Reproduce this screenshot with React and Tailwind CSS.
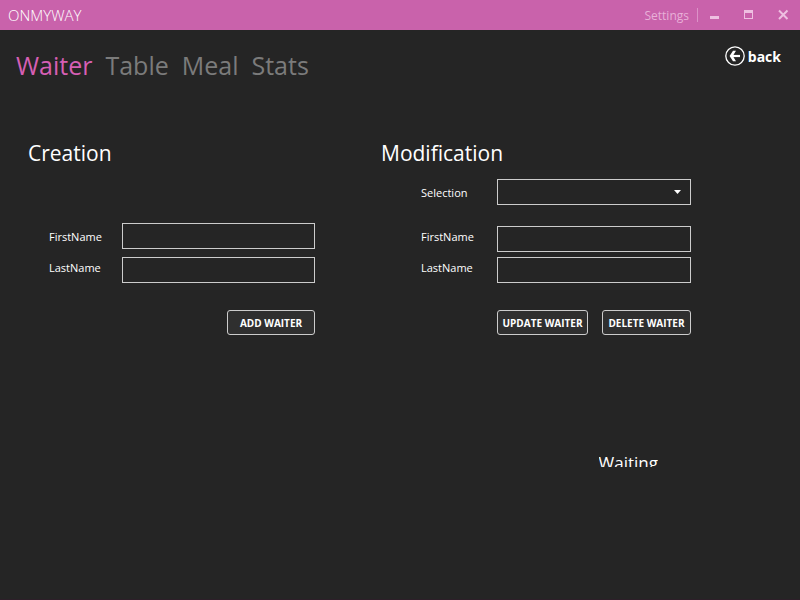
import React from "react";

const fieldClass =
  "h-[26px] min-w-0 flex-1 rounded-none border border-[#cccccc] bg-[#252525] px-1 text-xs text-white outline-none";
const labelClass = "pt-[3px] pl-px text-[11px] leading-4 text-white";
const buttonClass =
  "h-[25px] rounded-[3px] border border-[#cccccc] bg-[#2f2f2f] text-center text-[10px] leading-4 font-bold whitespace-nowrap text-white";

function TitleBar() {
  return (
    <header className="flex h-[30px] items-center bg-[#c962ab] pr-[10px] pl-2">
      <h1 className="flex-1 text-[15px] leading-5 font-light text-white">ONMYWAY</h1>
      <button className="pt-px text-xs leading-4 text-[#e8b0d8]">Settings</button>
      <span className="mr-3 ml-2 h-[14px] w-px bg-[#dc92c8]" />
      <div className="flex items-center gap-[22px] text-[#eebfe1]">
        <button aria-label="Minimize">
          <svg width="12" height="12" viewBox="0 0 12 12" className="block" shapeRendering="crispEdges">
            <path d="M0 7h9v3H0z" fill="currentColor" />
          </svg>
        </button>
        <button aria-label="Maximize">
          <svg width="12" height="12" viewBox="0 0 12 12" className="block" shapeRendering="crispEdges">
            <path d="M0 1h9v9H0zM1 4v5h7V4z" fill="currentColor" fillRule="evenodd" />
          </svg>
        </button>
        <button aria-label="Close">
          <svg width="12" height="12" viewBox="0 0 12 12" className="block">
            <path d="M1 1.5l8.5 8.5M9.5 1.5L1 10" stroke="currentColor" strokeWidth="2" />
          </svg>
        </button>
      </div>
    </header>
  );
}

function Navigation() {
  return (
    <div className="flex items-start justify-between pt-4 pr-[19px] pl-4">
      <nav className="flex gap-[13px] pt-px text-[25px] leading-9 text-[#7b7b7b]">
        <a href="#waiter" className="text-[#d65fb4]">Waiter</a>
        <a href="#table">Table</a>
        <a href="#meal">Meal</a>
        <a href="#stats">Stats</a>
      </nav>
      <button className="flex items-start gap-[3px] text-sm leading-5 font-bold text-white">
        <svg width="20" height="20" viewBox="0 0 20 20" fill="none" stroke="currentColor">
          <circle cx="10" cy="10" r="9.2" strokeWidth="1.3" />
          <path d="M15 10H7" strokeWidth="2.2" />
          <path d="M11 4.8H8L4.6 10L8 15.2h3L7.8 10z" fill="currentColor" stroke="none" />
        </svg>
        <span className="pt-px">back</span>
      </button>
    </div>
  );
}

function Creation() {
  return (
    <section className="pr-[66px]">
      <h2 className="pt-px text-[21px] leading-8 text-white">Creation</h2>
      <div className="mt-[54px] flex items-start pl-5">
        <label htmlFor="new-first" className={`mt-[3px] w-[74px] ${labelClass}`}>FirstName</label>
        <input id="new-first" type="text" className={fieldClass} />
      </div>
      <div className="mt-2 flex items-start pl-5">
        <label htmlFor="new-last" className={`w-[74px] ${labelClass}`}>LastName</label>
        <input id="new-last" type="text" className={fieldClass} />
      </div>
      <div className="mt-[27px] flex justify-end">
        <button className={`w-[88px] ${buttonClass}`}>ADD WAITER</button>
      </div>
    </section>
  );
}

function Modification() {
  return (
    <section className="pr-[109px]">
      <h2 className="pt-px text-[21px] leading-8 text-white">Modification</h2>
      <div className="mt-[10px] flex items-start pl-[39px]">
        <label htmlFor="selection" className={`mt-[3px] w-[77px] ${labelClass}`}>Selection</label>
        <div className="relative flex flex-1">
          <select id="selection" className={`appearance-none ${fieldClass}`} />
          <svg width="7" height="4" viewBox="0 0 7 4" className="pointer-events-none absolute top-[11px] right-[10px]">
            <path d="M0 0h7L3.5 4z" fill="#fff" />
          </svg>
        </div>
      </div>
      <div className="mt-[21px] flex items-start pl-[39px]">
        <label htmlFor="edit-first" className={`w-[77px] ${labelClass}`}>FirstName</label>
        <input id="edit-first" type="text" className={fieldClass} />
      </div>
      <div className="mt-[5px] flex items-start pl-[39px]">
        <label htmlFor="edit-last" className={`w-[77px] ${labelClass}`}>LastName</label>
        <input id="edit-last" type="text" className={fieldClass} />
      </div>
      <div className="mt-[27px] flex justify-between pl-[116px]">
        <button className={`w-[91px] ${buttonClass}`}>UPDATE WAITER</button>
        <button className={`w-[89px] ${buttonClass}`}>DELETE WAITER</button>
      </div>
    </section>
  );
}

export default function App() {
  return (
    <div className="min-h-screen border-b border-[#2d1f29] bg-[#252525] font-['Open_Sans','Noto_Sans',sans-serif]">
      <TitleBar />
      <Navigation />
      <main className="mt-[53px] pl-7">
        <div className="grid grid-cols-[353fr_419fr]">
          <Creation />
          <Modification />
        </div>
        <div className="mt-[115px] flex justify-end pr-[142px]">
          <p className="h-[17px] overflow-hidden text-[17px] leading-[26px] text-white">Waiting</p>
        </div>
      </main>
    </div>
  );
}
